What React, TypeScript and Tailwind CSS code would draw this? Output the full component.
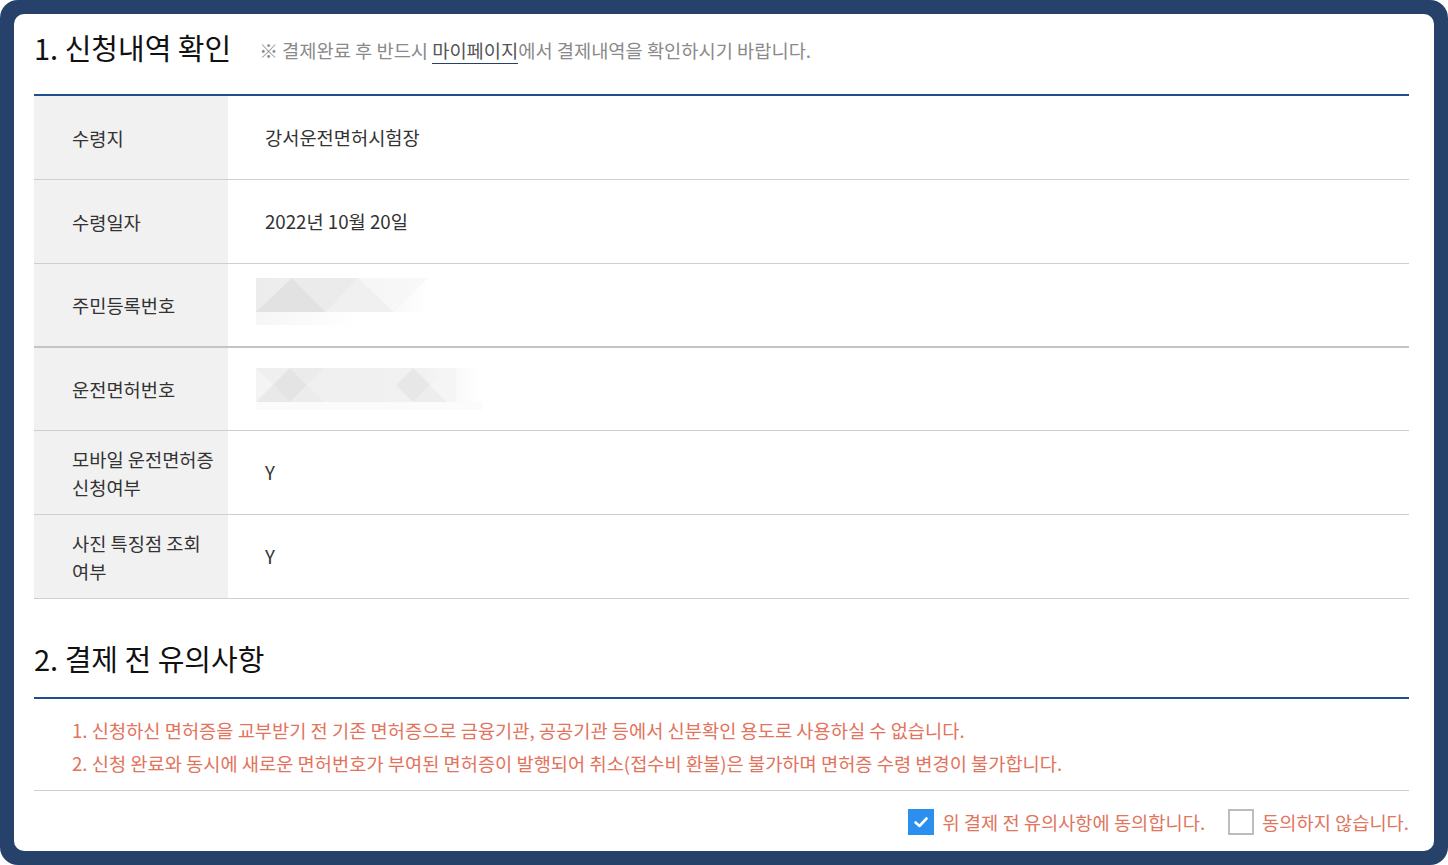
import React from "react";

const FONT = { fontFamily: '"Noto Sans CJK KR", "Noto Sans", sans-serif' };

function Blur1() {
  return (
    <svg width="180" height="48" viewBox="0 0 180 48">
      <defs>
        <linearGradient id="fadeA" x1="0" x2="1" y1="0" y2="0">
          <stop offset="0" stopColor="#ececec" />
          <stop offset="0.6" stopColor="#f2f2f2" />
          <stop offset="1" stopColor="#ffffff" />
        </linearGradient>
        <linearGradient id="fadeB" x1="0" x2="1" y1="0" y2="0">
          <stop offset="0" stopColor="#f6f6f6" />
          <stop offset="0.5" stopColor="#fafafa" />
          <stop offset="1" stopColor="#ffffff" />
        </linearGradient>
      </defs>
      <rect x="0" y="0" width="172" height="34" fill="url(#fadeA)" />
      <polygon points="0,34 36,0 70,34" fill="#e2e2e2" />
      <polygon points="70,34 102,0 36,0" fill="#ebebeb" />
      <polygon points="70,34 102,0 138,34" fill="#f0f0f0" />
      <polygon points="102,0 138,34 172,0" fill="#f6f6f6" opacity="0.8" />
      <rect x="0" y="34" width="100" height="13" fill="url(#fadeB)" />
    </svg>
  );
}

function Blur2() {
  return (
    <svg width="226" height="42" viewBox="0 0 226 42">
      <defs>
        <linearGradient id="fadeC" x1="0" x2="1" y1="0" y2="0">
          <stop offset="0" stopColor="#efefef" />
          <stop offset="0.75" stopColor="#f1f1f1" />
          <stop offset="1" stopColor="#ffffff" />
        </linearGradient>
      </defs>
      <rect x="0" y="0" width="226" height="34" fill="url(#fadeC)" />
      <polygon points="0,0 17,17 0,34" fill="#f4f4f4" />
      <polygon points="34,0 17,17 34,34 51,17" fill="#e4e4e4" />
      <polygon points="17,17 0,34 34,34" fill="#e9e9e9" />
      <polygon points="51,17 34,34 68,34" fill="#ececec" />
      <polygon points="34,0 68,0 51,17" fill="#ebebeb" />
      <polygon points="140,17 157,0 174,17 157,34" fill="#e7e7e7" />
      <polygon points="174,17 191,34 157,34" fill="#ededed" />
      <polygon points="174,17 191,0 200,0 200,34 191,34" fill="#f5f5f5" />
      <rect x="0" y="34" width="226" height="8" fill="#fbfbfb" />
    </svg>
  );
}

function Row({
  label,
  children,
  thick = false,
  top = false,
  short = false,
}: {
  label: React.ReactNode;
  children: React.ReactNode;
  thick?: boolean;
  top?: boolean;
  short?: boolean;
}) {
  return (
    <div
      className={`flex ${short ? "h-[83px]" : "h-[84px]"} ${thick ? "border-b-2 border-[#c4c4c4]" : "border-b border-[#cfcfcf]"}`}
    >
      <div className="flex w-[194px] shrink-0 items-center bg-[#f1f1f1] pl-[38px] text-[18.7px] leading-[28px] text-[#333]">
        {label}
      </div>
      <div
        className={`flex flex-1 pl-[37px] text-[18.7px] text-[#333] ${top ? "items-start" : "items-center"}`}
      >
        {children}
      </div>
    </div>
  );
}

export default function App() {
  return (
    <div className="h-[865px] w-[1448px] bg-white" style={FONT}>
      <div className="h-full rounded-[18px] bg-[#27426a] p-[14px]">
        <div className="h-full rounded-[10px] bg-white pl-[20px] pr-[25px] pt-[15px]">
          <div className="flex items-center">
            <h1 className="text-[29px] font-normal leading-[36px] text-[#111]">1. 신청내역 확인</h1>
            <p className="ml-[28px] mt-[6px] text-[18.7px] leading-[28px] text-[#8a8a8a]">
              ※ 결제완료 후 반드시{" "}
              <span className="border-b border-[#27426a] text-[#555]">마이페이지</span>에서 결제내역을 확인하시기 바랍니다.
            </p>
          </div>

          <div className="mt-[29px] border-t-2 border-[#1f4f8d]">
            <Row label="수령지">강서운전면허시험장</Row>
            <Row label="수령일자">2022년 10월 20일</Row>
            <Row label="주민등록번호" thick top>
              <div className="-ml-[9px] mt-[14px]">
                <Blur1 />
              </div>
            </Row>
            <Row label="운전면허번호" top short>
              <div className="-ml-[9px] mt-[20px]">
                <Blur2 />
              </div>
            </Row>
            <Row
              label={
                <span>
                  모바일 운전면허증
                  <br />
                  신청여부
                </span>
              }
            >
              Y
            </Row>
            <Row
              label={
                <span>
                  사진 특징점 조회
                  <br />
                  여부
                </span>
              }
            >
              Y
            </Row>
          </div>

          <h2 className="mt-[41px] text-[29px] font-normal leading-[36px] text-[#111]">2. 결제 전 유의사항</h2>

          <div className="mt-[21px] border-t-2 border-[#1f4f8d] pb-[11px] pl-[38px] pt-[14px] text-[18.7px] leading-[33px] text-[#e2735d]">
            <p>1. 신청하신 면허증을 교부받기 전 기존 면허증으로 금융기관, 공공기관 등에서 신분확인 용도로 사용하실 수 없습니다.</p>
            <p>2. 신청 완료와 동시에 새로운 면허번호가 부여된 면허증이 발행되어 취소(접수비 환불)은 불가하며 면허증 수령 변경이 불가합니다.</p>
          </div>
          <div className="border-t border-[#cfcfcf]" />

          <div className="mt-[17px] flex items-center justify-end text-[18.7px] text-[#e07560]">
            <label className="flex items-center">
              <span className="flex h-[26px] w-[26px] items-center justify-center bg-[#2b8ff0]">
                <svg width="16" height="16" viewBox="0 0 16 16">
                  <path d="M2.5 8.5 L6.5 12 L13.5 4.5" fill="none" stroke="#fff" strokeWidth="2.6" strokeLinecap="round" strokeLinejoin="round" />
                </svg>
              </span>
              <span className="ml-[8px]">위 결제 전 유의사항에 동의합니다.</span>
            </label>
            <label className="ml-[23px] flex items-center">
              <span className="h-[26px] w-[26px] border-2 border-[#bdbdbd] bg-white" />
              <span className="ml-[8px]">동의하지 않습니다.</span>
            </label>
          </div>
        </div>
      </div>
    </div>
  );
}
